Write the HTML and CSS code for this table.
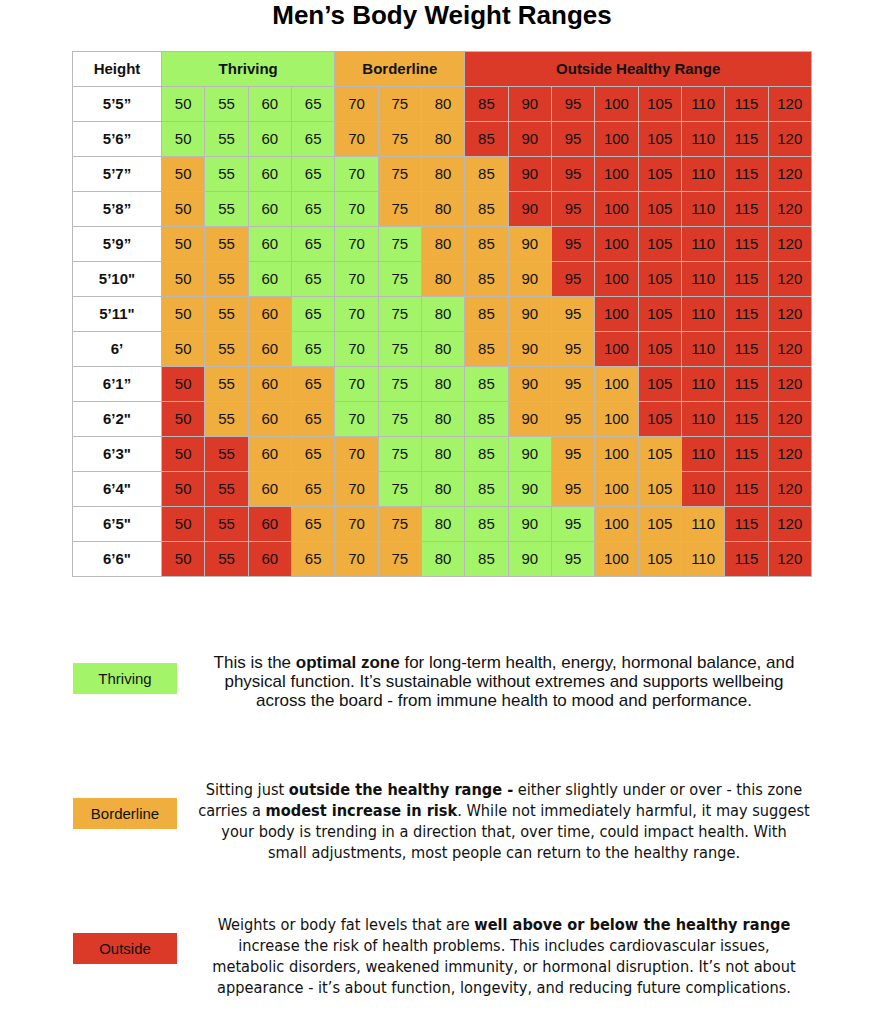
FILE: index.html
```html
<!DOCTYPE html>
<html>
<head>
<meta charset="utf-8">
<title>Men’s Body Weight Ranges</title>
<link rel="stylesheet" href="styles.css">
</head>
<body>
<h1 class="title">Men’s Body Weight Ranges</h1>
<table class="chart">
  <colgroup>
    <col class="col-h">
    <col span="15">
  </colgroup>
  <thead>
    <tr>
      <th class="hcell">Height</th>
      <th class="g" colspan="4">Thriving</th>
      <th class="o" colspan="3">Borderline</th>
      <th class="r" colspan="8">Outside Healthy Range</th>
    </tr>
  </thead>
  <tbody>
    <tr><th class="hcell">5’5”</th><td class="g">50</td><td class="g">55</td><td class="g">60</td><td class="g">65</td><td class="o">70</td><td class="o">75</td><td class="o">80</td><td class="r">85</td><td class="r">90</td><td class="r">95</td><td class="r">100</td><td class="r">105</td><td class="r">110</td><td class="r">115</td><td class="r">120</td></tr>
    <tr><th class="hcell">5’6”</th><td class="g">50</td><td class="g">55</td><td class="g">60</td><td class="g">65</td><td class="o">70</td><td class="o">75</td><td class="o">80</td><td class="r">85</td><td class="r">90</td><td class="r">95</td><td class="r">100</td><td class="r">105</td><td class="r">110</td><td class="r">115</td><td class="r">120</td></tr>
    <tr><th class="hcell">5’7”</th><td class="o">50</td><td class="g">55</td><td class="g">60</td><td class="g">65</td><td class="g">70</td><td class="o">75</td><td class="o">80</td><td class="o">85</td><td class="r">90</td><td class="r">95</td><td class="r">100</td><td class="r">105</td><td class="r">110</td><td class="r">115</td><td class="r">120</td></tr>
    <tr><th class="hcell">5’8”</th><td class="o">50</td><td class="g">55</td><td class="g">60</td><td class="g">65</td><td class="g">70</td><td class="o">75</td><td class="o">80</td><td class="o">85</td><td class="r">90</td><td class="r">95</td><td class="r">100</td><td class="r">105</td><td class="r">110</td><td class="r">115</td><td class="r">120</td></tr>
    <tr><th class="hcell">5’9”</th><td class="o">50</td><td class="o">55</td><td class="g">60</td><td class="g">65</td><td class="g">70</td><td class="g">75</td><td class="o">80</td><td class="o">85</td><td class="o">90</td><td class="r">95</td><td class="r">100</td><td class="r">105</td><td class="r">110</td><td class="r">115</td><td class="r">120</td></tr>
    <tr><th class="hcell">5’10"</th><td class="o">50</td><td class="o">55</td><td class="g">60</td><td class="g">65</td><td class="g">70</td><td class="g">75</td><td class="o">80</td><td class="o">85</td><td class="o">90</td><td class="r">95</td><td class="r">100</td><td class="r">105</td><td class="r">110</td><td class="r">115</td><td class="r">120</td></tr>
    <tr><th class="hcell">5’11"</th><td class="o">50</td><td class="o">55</td><td class="o">60</td><td class="g">65</td><td class="g">70</td><td class="g">75</td><td class="g">80</td><td class="o">85</td><td class="o">90</td><td class="o">95</td><td class="r">100</td><td class="r">105</td><td class="r">110</td><td class="r">115</td><td class="r">120</td></tr>
    <tr><th class="hcell">6’</th><td class="o">50</td><td class="o">55</td><td class="o">60</td><td class="g">65</td><td class="g">70</td><td class="g">75</td><td class="g">80</td><td class="o">85</td><td class="o">90</td><td class="o">95</td><td class="r">100</td><td class="r">105</td><td class="r">110</td><td class="r">115</td><td class="r">120</td></tr>
    <tr><th class="hcell">6’1”</th><td class="r">50</td><td class="o">55</td><td class="o">60</td><td class="o">65</td><td class="g">70</td><td class="g">75</td><td class="g">80</td><td class="g">85</td><td class="o">90</td><td class="o">95</td><td class="o">100</td><td class="r">105</td><td class="r">110</td><td class="r">115</td><td class="r">120</td></tr>
    <tr><th class="hcell">6’2"</th><td class="r">50</td><td class="o">55</td><td class="o">60</td><td class="o">65</td><td class="g">70</td><td class="g">75</td><td class="g">80</td><td class="g">85</td><td class="o">90</td><td class="o">95</td><td class="o">100</td><td class="r">105</td><td class="r">110</td><td class="r">115</td><td class="r">120</td></tr>
    <tr><th class="hcell">6’3"</th><td class="r">50</td><td class="r">55</td><td class="o">60</td><td class="o">65</td><td class="o">70</td><td class="g">75</td><td class="g">80</td><td class="g">85</td><td class="g">90</td><td class="o">95</td><td class="o">100</td><td class="o">105</td><td class="r">110</td><td class="r">115</td><td class="r">120</td></tr>
    <tr><th class="hcell">6’4"</th><td class="r">50</td><td class="r">55</td><td class="o">60</td><td class="o">65</td><td class="o">70</td><td class="g">75</td><td class="g">80</td><td class="g">85</td><td class="g">90</td><td class="o">95</td><td class="o">100</td><td class="o">105</td><td class="r">110</td><td class="r">115</td><td class="r">120</td></tr>
    <tr><th class="hcell">6’5"</th><td class="r">50</td><td class="r">55</td><td class="r">60</td><td class="o">65</td><td class="o">70</td><td class="o">75</td><td class="g">80</td><td class="g">85</td><td class="g">90</td><td class="g">95</td><td class="o">100</td><td class="o">105</td><td class="o">110</td><td class="r">115</td><td class="r">120</td></tr>
    <tr><th class="hcell">6’6"</th><td class="r">50</td><td class="r">55</td><td class="r">60</td><td class="o">65</td><td class="o">70</td><td class="o">75</td><td class="g">80</td><td class="g">85</td><td class="g">90</td><td class="g">95</td><td class="o">100</td><td class="o">105</td><td class="o">110</td><td class="r">115</td><td class="r">120</td></tr>
  </tbody>
</table>

<section class="legend">
  <div class="legend-row">
    <div class="badge g">Thriving</div>
    <div class="desc-col">
      <p class="desc desc-thriving">This is the <b>optimal zone</b> for long-term health, energy, hormonal balance, and physical function. It’s sustainable without extremes and supports wellbeing across the board - from immune health to mood and performance.</p>
    </div>
  </div>
  <div class="legend-row">
    <div class="badge o">Borderline</div>
    <div class="desc-col">
      <p class="desc desc-narrow">Sitting just <b>outside the healthy range -</b> either slightly under or over - this zone<br>carries a <b>modest increase in risk</b>. While not immediately harmful, it may suggest<br>your body is trending in a direction that, over time, could impact health. With<br>small adjustments, most people can return to the healthy range.</p>
    </div>
  </div>
  <div class="legend-row">
    <div class="badge r">Outside</div>
    <div class="desc-col">
      <p class="desc desc-narrow">Weights or body fat levels that are <b>well above or below the healthy range</b><br>increase the risk of health problems. This includes cardiovascular issues,<br>metabolic disorders, weakened immunity, or hormonal disruption. It’s not about<br>appearance - it’s about function, longevity, and reducing future complications.</p>
    </div>
  </div>
</section>
</body>
</html>
```

FILE: styles.css
```css
html, body {
  margin: 0;
  padding: 0;
  background: #ffffff;
}
body {
  width: 884px;
  font-family: "Liberation Sans", Arial, Helvetica, sans-serif;
  color: #111111;
}
.title {
  margin: 0;
  height: 30px;
  line-height: 30px;
  font-size: 26px;
  font-weight: bold;
  text-align: center;
  color: #000;
}
.chart {
  margin: 21px auto 0 auto;
  width: 740px;
  table-layout: fixed;
  border-collapse: collapse;
  font-size: 15px;
}
.col-h {
  width: 89px;
}
.chart th,
.chart td {
  height: 34px;
  padding: 0;
  border: 1px solid #b9b9b9;
  text-align: center;
  vertical-align: middle;
  line-height: 18px;
}
.chart td {
  font-weight: normal;
}
.chart th {
  font-weight: bold;
}
.hcell {
  background: #ffffff;
  border-color: #d4d4d4;
}
.g { background: #a4f46a; }
.o { background: #efae3e; }
.r { background: #da3a27; }

.legend {
  margin-top: 34px;
  padding-left: 73px;
}
.legend-row {
  height: 135px;
  display: flex;
  align-items: center;
  gap: 17px;
}
.badge {
  flex: none;
  width: 104px;
  height: 31px;
  display: flex;
  align-items: center;
  justify-content: center;
  font-size: 15px;
  color: #111;
}
.desc-col {
  width: 620px;
  display: flex;
  justify-content: center;
}
.desc {
  margin: 0;
  text-align: center;
  color: #111;
}
.desc-thriving {
  max-width: 596px;
  margin-top: 5px;
  font-size: 17px;
  line-height: 19px;
}
.desc-narrow {
  flex: none;
  white-space: nowrap;
  margin-top: 15px;
  font-family: "DejaVu Sans Condensed", "Liberation Sans", sans-serif;
  font-size: 16.2px;
  line-height: 21px;
}
```
